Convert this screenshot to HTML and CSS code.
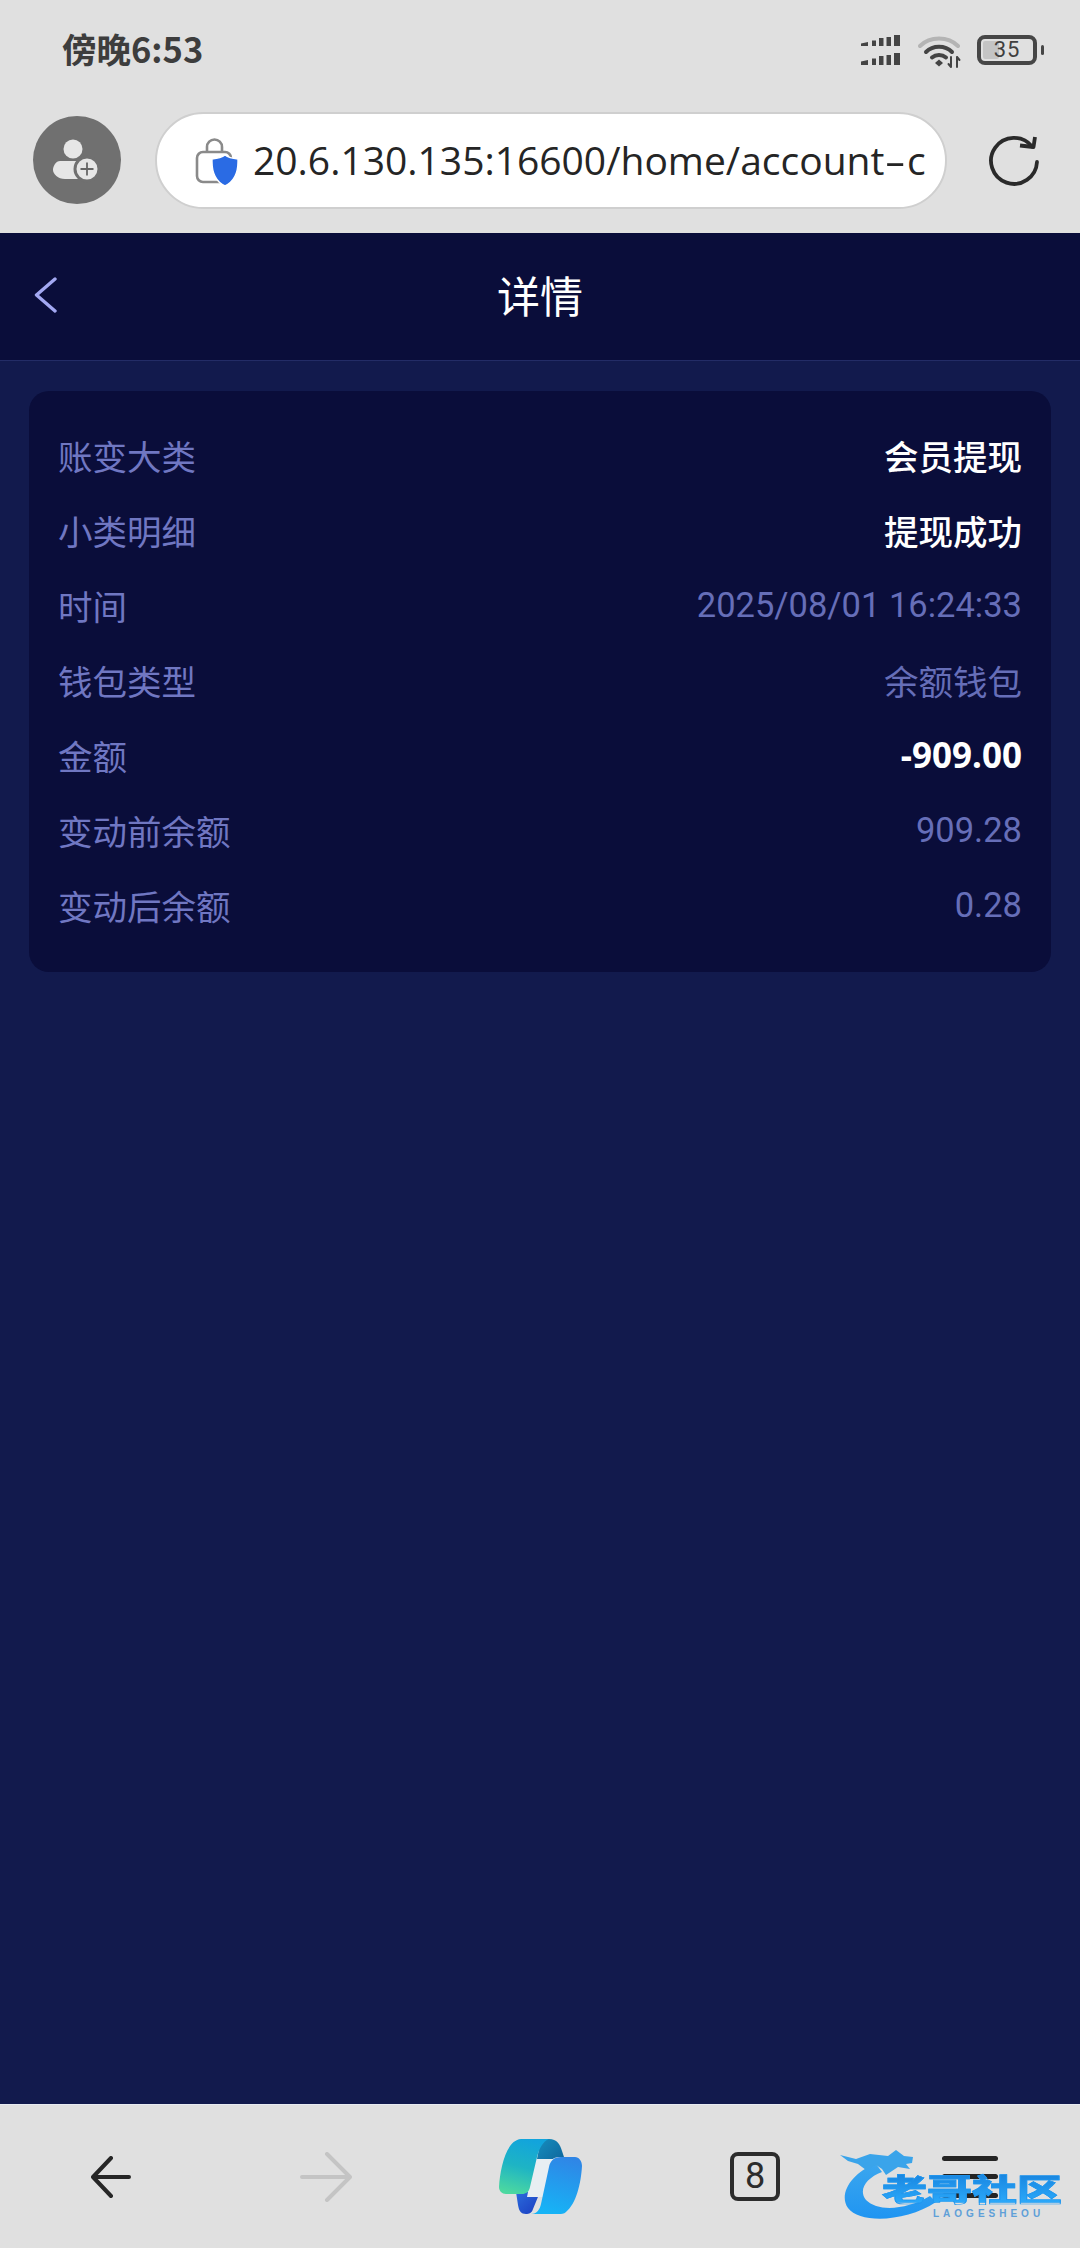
FILE: index.html
```html
<!DOCTYPE html>
<html lang="zh-CN">
<head>
<meta charset="utf-8">
<title>详情</title>
<link rel="stylesheet" href="styles.css">
</head>
<body>
<div class="phone">
  <header class="chrome">
    <div class="status">
      <span class="clock">傍晚6:53</span>
      <div class="status-icons">
        <svg class="signal" width="40" height="32" viewBox="0 0 40 32" fill="#444">
          <path d="M0 8.500 7 7v4H0zM11 5.500h4V11h-4zM18 3h4.500v8H18zM25.500 2H30v9h-4.500zM33 0h6v11h-6z"/>
          <path d="M0 26.500 7 25v5H0zM11 23.500h4V30h-4zM18 21h4.500v9H18zM25.500 20H30v10h-4.500zM33 18h6v12h-6z"/>
        </svg>
        <svg class="wifi" width="44" height="34" viewBox="0 0 44 34" fill="none" stroke-linecap="round">
          <path d="M2 11C12 1 30 1 40 11" stroke="#b4b4b4" stroke-width="4"/>
          <path d="M8 17C15 10 27 10 34 17" stroke="#444" stroke-width="4"/>
          <path d="M14 22.500C18 19 24 19 28 22.500" stroke="#444" stroke-width="4"/>
          <path d="M21 24.500 25 28 21 31.500 17 28z" fill="#444"/>
          <path d="M33 22v10M33 32l-2.500-3M39 32V22M39 22l2.500 3" stroke="#444" stroke-width="2"/>
        </svg>
        <div class="battery"><span class="battery-level"></span><span class="battery-num">35</span></div>
        <span class="battery-nub"></span>
      </div>
    </div>
    <div class="toolbar">
      <div class="avatar">
        <svg width="50" height="46" viewBox="0 0 50 46">
          <circle cx="21" cy="12" r="9.500" fill="#e6e6e6"/>
          <path d="M8 24h26a9 9 0 0 1 0 18H13C6 42 1 37 1 33s3-9 7-9z" fill="#e6e6e6"/>
          <circle cx="35" cy="32" r="12" fill="#e6e6e6" stroke="#707070" stroke-width="3"/>
          <path d="M35 25.500v13M28.500 32h13" stroke="#666" stroke-width="1.800"/>
        </svg>
      </div>
      <div class="urlbar">
        <svg class="lock" width="44" height="50" viewBox="0 0 44 50" fill="none">
          <path d="M12 16v-6a7.500 7.500 0 0 1 15 0v6" stroke="#8a8a8a" stroke-width="2.600"/>
          <rect x="2" y="15" width="34" height="30" rx="6" stroke="#8a8a8a" stroke-width="2.600"/>
          <path d="M30 18c2.500 2 7 3.500 13 4 .5 11-2.500 22-13 27C19.500 44 16.500 33 17 22c6-.5 10.500-2 13-4z" fill="#2a6be4" stroke="#fff" stroke-width="1.500"/>
        </svg>
        <span class="url">20.6.130.135:16600/home/account<span class="url-dash">-</span>c</span>
      </div>
      <svg class="reload" width="50" height="52" viewBox="0 0 50 52" fill="none" stroke="#2a2a2a" stroke-width="3.800" stroke-linecap="round" stroke-linejoin="round">
        <path d="M43 11.500A23 23 0 1 0 48 27"/>
        <path d="M31 10.500 44.500 12 46 2" stroke-linecap="butt"/>
      </svg>
    </div>
  </header>

  <main class="app">
    <nav class="navbar">
      <svg class="nav-back" width="24" height="36" viewBox="0 0 24 36" fill="none" stroke="#a3a8f2" stroke-width="3.400" stroke-linecap="round" stroke-linejoin="round">
        <path d="M21 2 2.500 18 21 34"/>
      </svg>
      <h1 class="nav-title">详情</h1>
    </nav>
    <section class="card">
      <div class="row"><span class="label">账变大类</span><span class="value strong">会员提现</span></div>
      <div class="row"><span class="label">小类明细</span><span class="value strong">提现成功</span></div>
      <div class="row"><span class="label">时间</span><span class="value">2025/08/01 16:24:33</span></div>
      <div class="row"><span class="label">钱包类型</span><span class="value">余额钱包</span></div>
      <div class="row"><span class="label">金额</span><span class="value amount">-909.00</span></div>
      <div class="row"><span class="label">变动前余额</span><span class="value">909.28</span></div>
      <div class="row"><span class="label">变动后余额</span><span class="value">0.28</span></div>
    </section>
  </main>

  <footer class="bottombar">
    <svg class="tool back" width="40" height="42" viewBox="0 0 40 42" fill="none" stroke="#262626" stroke-width="4" stroke-linecap="round" stroke-linejoin="round">
      <path d="M38 21H3M20 2 2 21l18 19"/>
    </svg>
    <svg class="tool forward" width="52" height="50" viewBox="0 0 52 50" fill="none" stroke="#c4c4c4" stroke-width="4" stroke-linecap="round" stroke-linejoin="round">
      <path d="M2 25h47M27 2l23 23-23 23"/>
    </svg>
    <svg class="tool copilot" width="83" height="75" viewBox="0 0 83 75">
      <defs>
        <linearGradient id="leftBand" x1="0.55" y1="0" x2="0.3" y2="1">
          <stop offset="0" stop-color="#12a4dc"/><stop offset="0.5" stop-color="#1eb4c4"/><stop offset="1" stop-color="#4cd8a0"/>
        </linearGradient>
        <linearGradient id="rightBand" x1="0.65" y1="0" x2="0.4" y2="1">
          <stop offset="0" stop-color="#2f86e6"/><stop offset="1" stop-color="#16b4f6"/>
        </linearGradient>
        <linearGradient id="topFold" x1="0" y1="0" x2="1" y2="1">
          <stop offset="0" stop-color="#1690c0"/><stop offset="1" stop-color="#0d5f96"/>
        </linearGradient>
        <linearGradient id="lowFold" x1="0" y1="0" x2="1" y2="1">
          <stop offset="0" stop-color="#2c6cdc"/><stop offset="1" stop-color="#1a3cc0"/>
        </linearGradient>
      </defs>
      <path d="M42 0h8c8 0 11 5 13 12l2 6h-5c-6 0-9 4-10 8l-2 4H36z" fill="url(#topFold)"/>
      <path d="M17 53h24l-7 17c-1 4-4 5-7 5-5 0-7-3-8-9z" fill="url(#lowFold)"/>
      <path d="M36 20h20L44 58H28z" fill="#e8eef2"/>
      <path d="M22 0h28c-6 2-10 10-12 18l-7 30c-1 5-4 7-8 7H7c-4 0-7-3-7-7C1 30 7 1 22 0z" fill="url(#leftBand)"/>
      <path d="M62 18h14c4 0 7 4 7 9-1 18-6 38-16 46-2 2-5 2-7 2H32c6 0 9-5 10-10l8-37c1-6 5-10 12-10z" fill="url(#rightBand)"/>
    </svg>
    <div class="tool tabs">8</div>
    <div class="tool menu"><span></span><span></span><span></span></div>

    <div class="brand-mark">
      <svg class="brand-dragon" width="224" height="72" viewBox="0 0 224 72">
        <defs>
          <linearGradient id="dragonFill" x1="0" y1="0" x2="0" y2="1">
            <stop offset="0" stop-color="#3ba6ee"/><stop offset="1" stop-color="#1f95f2"/>
          </linearGradient>
        </defs>
        <path d="M36 14C12 22 -2 44 8 58c12 16 58 14 88-6l-6-6C66 60 38 62 26 50 18 40 26 28 42 22z" fill="url(#dragonFill)"/>
        <path d="M0 5 16 9 30 4 48 6 56 0 64 6 73 7 72 13 66 14 70 19 58 17 46 25 42 19 36 15 26 20 18 14 8 11z" fill="#3aa4ea"/>
      </svg>
      <span class="brand-name">老哥社区</span>
      <span class="brand-sub">LAOGESHEOU</span>
    </div>
  </footer>
</div>
</body>
</html>
```

FILE: styles.css
```css
* {
  box-sizing: border-box;
}

html,
body {
  margin: 0;
  padding: 0;
}

body {
  font-family: Roboto, "Noto Sans CJK SC", sans-serif;
}

.phone {
  width: 1080px;
  height: 2248px;
  display: flex;
  flex-direction: column;
  background: #121a4d;
  overflow: hidden;
}

/* Browser chrome */
.chrome {
  height: 233px;
  flex: none;
  background: #e0e0e0;
  display: flex;
  flex-direction: column;
}

.status {
  height: 100px;
  padding: 28px 36px 0 62px;
  display: flex;
  justify-content: space-between;
  align-items: flex-start;
}

.clock {
  font-size: 34.500px;
  line-height: 40px;
  font-weight: 700;
  color: #3d3d3d;
  font-family: "Noto Sans CJK SC", sans-serif;
}

.status-icons {
  display: flex;
  align-items: flex-start;
  margin-top: 7px;
}

.signal {
  margin-right: 17px;
}

.wifi {
  margin-right: 15px;
}

.battery {
  width: 60px;
  height: 30px;
  border: 4px solid #464646;
  border-radius: 8px;
  position: relative;
  display: flex;
  align-items: center;
  justify-content: center;
}

.battery-level {
  position: absolute;
  left: 2px;
  top: 2px;
  bottom: 2px;
  width: 16px;
  background: #c4c4c4;
  border-radius: 2px;
}

.battery-num {
  position: relative;
  font-size: 22px;
  line-height: 22px;
  letter-spacing: 1px;
  color: #3f3f3f;
}

.battery-nub {
  width: 3px;
  height: 10px;
  margin: 10px 0 0 4px;
  background: #464646;
  border-radius: 2px;
}

.toolbar {
  display: flex;
  align-items: flex-start;
  padding: 12px 0 0 33px;
}

.avatar {
  width: 88px;
  height: 88px;
  margin-top: 4px;
  border-radius: 50%;
  background: #707070;
  display: flex;
  align-items: center;
  justify-content: center;
}

.urlbar {
  width: 792px;
  height: 97px;
  margin-left: 34px;
  padding: 0 20px 0 38px;
  background: #fff;
  border: 2px solid #cfcfcf;
  border-radius: 49px;
  display: flex;
  align-items: center;
  overflow: hidden;
}

.lock {
  flex: none;
  margin-top: 2px;
  margin-right: 14px;
}

.url {
  flex: 1;
  font-family: "Open Sans", Roboto, sans-serif;
  font-size: 39px;
  line-height: 48px;
  margin-bottom: 2px;
  color: #252525;
  white-space: nowrap;
  overflow: hidden;
}

.url-dash {
  display: inline-block;
  margin: 0 5px;
  transform: scaleX(1.7);
}

.reload {
  margin: 23px 0 0 42px;
}

/* Page */
.app {
  flex: 1;
  min-height: 0;
  background: #121a4d;
}

.navbar {
  height: 128px;
  padding-bottom: 6px;
  position: relative;
  background: #0a0d3a;
  border-bottom: 1px solid #232c66;
  display: flex;
  align-items: center;
  justify-content: center;
}

.nav-back {
  position: absolute;
  left: 34px;
  top: 44px;
}

.nav-title {
  margin: 0;
  font-size: 43px;
  line-height: 60px;
  font-weight: 400;
  color: #fff;
  font-family: "Noto Sans CJK SC", sans-serif;
}

.card {
  margin: 30px 29px 0;
  height: 581px;
  padding: 26px 29px 0;
  background: #0a0d3a;
  border-radius: 20px;
}

.row {
  height: 75px;
  display: flex;
  justify-content: space-between;
  align-items: center;
  font-size: 34.500px;
}

.label {
  color: #7077c2;
  font-family: "Noto Sans CJK SC", sans-serif;
}

.value {
  color: #666eb8;
  font-family: Roboto, "Noto Sans CJK SC", sans-serif;
}

.value.strong {
  color: #fff;
  font-weight: 500;
}

.value.amount {
  color: #fff;
  font-size: 35px;
  font-weight: 700;
  font-family: "Noto Sans", Roboto, sans-serif;
}

/* Bottom toolbar */
.bottombar {
  height: 144px;
  flex: none;
  position: relative;
  padding-left: 91px;
  background: #e0e0e0;
  border-top: 1px solid #e8ebf2;
  display: flex;
  align-items: center;
}

.tool {
  flex: none;
}

.forward {
  margin-left: 169px;
}

.copilot {
  margin-left: 147px;
}

.tabs {
  width: 50px;
  height: 49px;
  margin-left: 148px;
  border: 4px solid #2c2c2c;
  border-radius: 8px;
  font-size: 36px;
  line-height: 41px;
  text-align: center;
  color: #2c2c2c;
}

.menu {
  width: 56px;
  height: 42px;
  margin-left: 162px;
  display: flex;
  flex-direction: column;
  justify-content: space-between;
}

.menu span {
  height: 5px;
  background: #242424;
  border-radius: 3px;
}

/* Translucent site mark laid over the toolbar's corner */
.brand-mark {
  position: absolute;
  left: 840px;
  top: 45px;
  width: 224px;
  height: 72px;
}

.brand-dragon {
  position: absolute;
  left: 0;
  top: 0;
}

.brand-name {
  position: absolute;
  left: 42px;
  top: 15px;
  font-family: "Noto Sans CJK SC", sans-serif;
  font-size: 45px;
  line-height: 45px;
  font-weight: 900;
  white-space: nowrap;
  color: transparent;
  background: linear-gradient(#1883de, #2ba9fa);
  -webkit-background-clip: text;
  background-clip: text;
  -webkit-text-stroke: 1px #2096ee;
  transform: scaleY(0.68);
}

.brand-sub {
  position: absolute;
  left: 93px;
  top: 58px;
  font-family: "Liberation Sans", sans-serif;
  font-size: 10px;
  line-height: 12px;
  font-weight: 700;
  letter-spacing: 4px;
  color: #5e9fd8;
  white-space: nowrap;
}
```
